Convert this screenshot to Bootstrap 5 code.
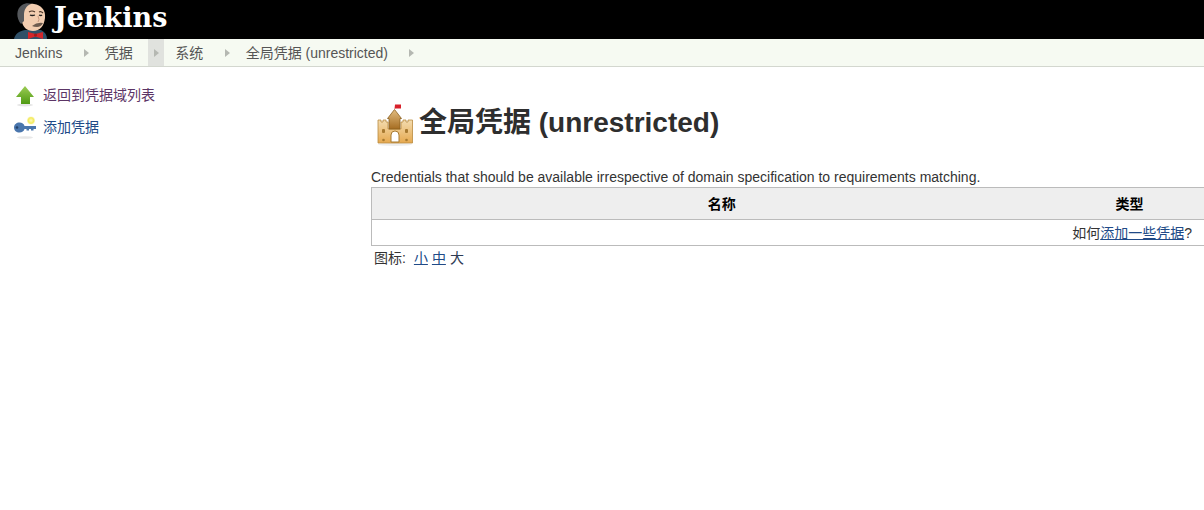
<!DOCTYPE html>
<html lang="zh-CN">
<head>
    <meta charset="UTF-8">
    <meta name="viewport" content="width=device-width, initial-scale=1.0">
    <title>全局凭据 (unrestricted)</title>
    <link href="https://cdn.jsdelivr.net/npm/bootstrap@5.3.3/dist/css/bootstrap.min.css" rel="stylesheet">
    <style>
        html, body { height: 100%; }
        body { font-family: "Liberation Sans", "Noto Sans CJK SC", sans-serif; font-size: 14px; line-height: 18px; color: #333; overflow: hidden; background: #fff; }
        a { color: #204a87; }
        .jk-header { height: 39px; background: #000; padding-left: 14px; }
        .jk-logo-text { font-family: "DejaVu Serif", serif; font-weight: 700; font-size: 27px; line-height: 36px; color: #fff; margin-left: 4px; }
        .jk-crumbs { height: 28px; background: #f6faf2; border-bottom: 1px solid #d3d7cf; color: #555; }
        .jk-crumb { padding-left: 11px; padding-right: 15.4px; line-height: 28px; }
        .jk-crumb:first-child { padding-left: 15px; }
        .jk-arrow { width: 16px; height: 27px; }
        .jk-arrow.on { background: #e0e2de; }
        .jk-arrow::after { content: ""; border-left: 5px solid #b5b8b2; border-top: 4px solid transparent; border-bottom: 4px solid transparent; margin-left: 6px; }
        .jk-side { width: 371px; padding: 12px 0 0 14px; }
        .jk-task { height: 32px; gap: 7px; }
        .jk-task a { text-decoration: none; }
        .jk-task a.visited { color: #5c3566; }
        .jk-main { width: 860px; padding-top: 36px; }
        .jk-title { font-size: 28px; line-height: 40px; font-weight: 700; color: #2e2e2e; margin: 0; gap: 5px; height: 40px; }
        .jk-desc { margin-top: 25px; height: 19px; white-space: nowrap; }
        .jk-table { width: 860px; border: 1px solid #bbb; border-collapse: collapse; margin: 0; table-layout: fixed; }
        .jk-table th { height: 32px; background: #eee; color: #000; font-size: 14px; font-weight: 700; text-align: center; padding: 0; border-bottom: 1px solid #bbb; }
        .jk-col-name { width: 700px; }
        .jk-col-type { width: 116px; }
        .jk-table td { height: 26px; padding: 0 38px 0 0; text-align: right; color: #333; }
        .jk-icons { margin: 3px 0 0 3px; gap: 8px; }
        .jk-sizes { gap: 4px; }
        .jk-sizes a { line-height: 18px; text-decoration: underline; }
        .jk-sizes a:last-child { text-decoration: none; color: #2e3c54; }
    </style>
</head>
<body>

<!-- header -->
<div class="jk-header d-flex align-items-start">
    <svg width="36" height="39" viewBox="0 0 36 39">
        <path d="M0 39 C1 34 5 31 11 30 L27 30 C31 32 33 35 33 39 Z" fill="#2f5068"/>
        <path d="M6 14 C6 6 13 3 20 4 C27 5 32 10 31 18 C30 26 26 31 19 31 C13 31 9 27 8 22 C6 20 5 17 6 14 Z" fill="#f2cdb0"/>
        <path d="M7 24 C2 18 2 9 8 5 C11 3 15 3 17 4 C12 6 10 10 10 15 L10 21 Z" fill="#55585c"/>
        <path d="M15 12 Q18 10 21 12 M25 12 Q27 11 29 13" stroke="#4a3426" stroke-width="1.2" fill="none"/>
        <path d="M16 15 Q18 16 21 15 M25 15 Q27 16 28 15" stroke="#222" stroke-width="1.3" fill="none"/>
        <path d="M24 16 Q26 20 24 22" stroke="#c89a80" stroke-width="1" fill="none"/>
        <path d="M18 26 Q23 22 29 23 Q27 27 23 27 Q20 27 18 26 Z" fill="#6e5c50"/>
        <path d="M14 32 L21.5 34 L29 32 L29 39 L21.5 36.5 L14 39 Z" fill="#d3262a"/>
        <circle cx="21.5" cy="35" r="1.6" fill="#a81518"/>
    </svg>
    <div class="jk-logo-text">Jenkins</div>
</div>

<!-- breadcrumb bar -->
<div class="jk-crumbs d-flex align-items-center">
    <span class="jk-crumb">Jenkins</span>
    <span class="jk-arrow d-flex align-items-center"></span>
    <span class="jk-crumb">凭据</span>
    <span class="jk-arrow on d-flex align-items-center"></span>
    <span class="jk-crumb">系统</span>
    <span class="jk-arrow d-flex align-items-center"></span>
    <span class="jk-crumb">全局凭据 (unrestricted)</span>
    <span class="jk-arrow d-flex align-items-center"></span>
</div>

<div class="d-flex">
    <!-- side panel -->
    <div class="jk-side flex-shrink-0">
        <div class="jk-task d-flex align-items-center">
            <svg width="22" height="24" viewBox="0 0 22 24">
                <defs>
                    <linearGradient id="upGreen" x1="0" y1="0" x2="0" y2="1">
                        <stop offset="0" stop-color="#9ccc55"/>
                        <stop offset="1" stop-color="#4f9a12"/>
                    </linearGradient>
                </defs>
                <ellipse cx="11" cy="22" rx="8" ry="1.5" fill="#e6e6e6"/>
                <path d="M11 3 L20 14 L16 14 L16 21 L7 21 L7 14 L2 14 Z" fill="url(#upGreen)"/>
            </svg>
            <a class="visited" href="#">返回到凭据域列表</a>
        </div>
        <div class="jk-task d-flex align-items-center">
            <svg width="22" height="24" viewBox="0 0 22 24">
                <defs>
                    <radialGradient id="keyGlow">
                        <stop offset="0" stop-color="#fff9c0"/>
                        <stop offset=".7" stop-color="#f3ea5c"/>
                        <stop offset="1" stop-color="#fbf8c8"/>
                    </radialGradient>
                </defs>
                <ellipse cx="11" cy="22.5" rx="8" ry="1.3" fill="#e8e8e8"/>
                <circle cx="17" cy="5.5" r="4" fill="url(#keyGlow)"/>
                <path d="M5.5 7.5 C8 7.5 10 9 10.5 11 L22 11 L22 14 L19.5 14 L19.5 15.5 L17 15.5 L17 14 L15 14 L15 15.5 L12.5 15.5 L12.5 14 L10.5 14 C10 16.2 8 17.5 5.5 17.5 C2.5 17.5 0 15.5 0 12.5 C0 9.5 2.5 7.5 5.5 7.5 Z" fill="#4a76ad"/>
                <circle cx="3" cy="12.5" r="1.3" fill="#23426b"/>
            </svg>
            <a href="#">添加凭据</a>
        </div>
    </div>

    <!-- main panel -->
    <div class="jk-main flex-shrink-0">
        <h1 class="jk-title d-flex align-items-center">
            <svg width="43" height="48" viewBox="0 0 43 48" class="flex-shrink-0">
                <defs>
                    <linearGradient id="wallTan" x1="0" y1="0" x2="0" y2="1">
                        <stop offset="0" stop-color="#f3dcb0"/>
                        <stop offset="1" stop-color="#e6a94f"/>
                    </linearGradient>
                    <linearGradient id="roofTan" x1="0" y1="0" x2="0" y2="1">
                        <stop offset="0" stop-color="#e2bd80"/>
                        <stop offset="1" stop-color="#a66d22"/>
                    </linearGradient>
                </defs>
                <ellipse cx="24" cy="45.5" rx="17" ry="1.5" fill="#eeeeee"/>
                <path d="M23.5 10 L24 5.5 L30 5.5 L30 9.5 L24.5 9.5 Z" fill="#d8202a"/>
                <path d="M7 21 L10 21 L10 23 L12 23 L12 21 L15 21 L15 23 L17 23 L17 30 L30 30 L30 23 L32 23 L32 21 L35 21 L35 23 L37 23 L37 21 L41.5 21 L41.5 44 L7 44 Z" fill="url(#wallTan)" stroke="#b98a3f" stroke-width=".8"/>
                <path d="M23.5 10.5 L30.5 19.5 L29 19.5 L29 30 L18 30 L18 19.5 L16.5 19.5 Z" fill="url(#roofTan)" stroke="#8c6020" stroke-width=".8"/>
                <path d="M20 43 L20 36 A4 4 0 0 1 28 36 L28 43 Z" fill="#fff" stroke="#a87a30"/>
                <rect x="11" y="30" width="3" height="4" rx="1" fill="#a87a30"/>
                <rect x="34" y="30" width="3" height="4" rx="1" fill="#a87a30"/>
                <circle cx="12.5" cy="41" r="1.3" fill="#a87a30"/>
                <circle cx="35.5" cy="41" r="1.3" fill="#a87a30"/>
            </svg>
            <span>全局凭据 (unrestricted)</span>
        </h1>
        <div class="jk-desc">Credentials that should be available irrespective of domain specification to requirements matching.</div>
        <table class="jk-table">
            <thead>
                <tr>
                    <th class="jk-col-name">名称</th>
                    <th class="jk-col-type">类型</th>
                    <th></th>
                </tr>
            </thead>
            <tbody>
                <tr>
                    <td colspan="3">如何<a href="#">添加一些凭据</a>?</td>
                </tr>
            </tbody>
        </table>
        <div class="jk-icons d-flex">
            <span>图标:</span>
            <span class="jk-sizes d-flex">
                <a href="#">小</a>
                <a href="#">中</a>
                <a href="#">大</a>
            </span>
        </div>
    </div>
</div>

<script src="https://cdn.jsdelivr.net/npm/bootstrap@5.3.3/dist/js/bootstrap.bundle.min.js"></script>
</body>
</html>
